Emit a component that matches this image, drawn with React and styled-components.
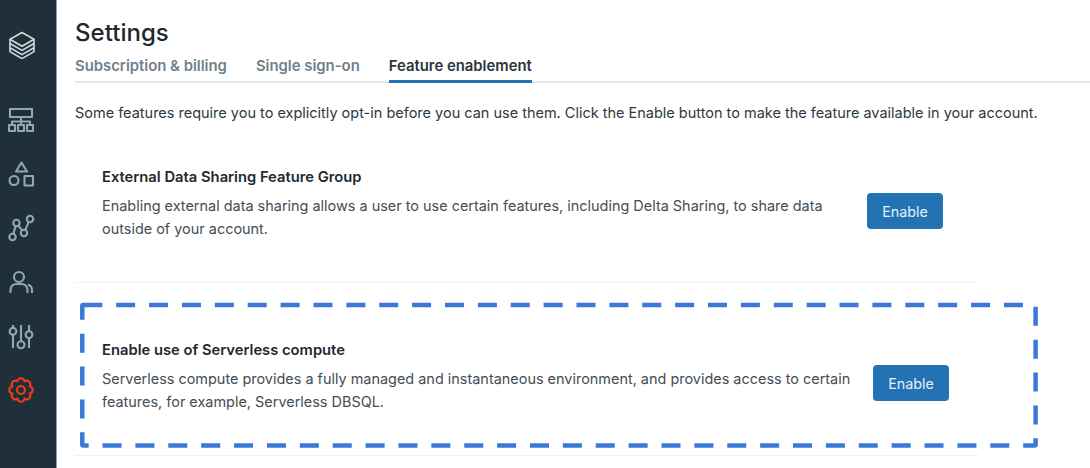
import styled, { createGlobalStyle } from 'styled-components';

const GlobalStyle = createGlobalStyle`
  html, body {
    margin: 0;
    padding: 0;
    background: #fff;
    font-family: 'Inter', 'Liberation Sans', sans-serif;
  }
  * {
    box-sizing: border-box;
  }
`;

const Page = styled.div`
  display: flex;
  width: 1090px;
  height: 468px;
  overflow: hidden;
`;

const Sidebar = styled.nav`
  display: flex;
  flex-direction: column;
  align-items: flex-start;
  flex: none;
  width: 57px;
  padding: 31px 0 0 7px;
  background: #1f303a;
  border-right: 1.5px solid #8e9ca6;
`;

const NavIcon = styled.svg`
  display: block;
  flex: none;
  width: 28px;
  height: 28px;
  margin-bottom: ${(p) => (p.$logo ? '47px' : '26px')};
  color: ${(p) => p.$color || '#93a6b4'};
  fill: none;
  stroke: currentColor;
  stroke-width: ${(p) => (p.$logo ? 1.6 : 2.1)};
  stroke-linejoin: round;
`;

const Main = styled.main`
  position: relative;
  flex: 1;
  padding: 18px 0 0 18px;
`;

const Title = styled.h1`
  margin: 0 0 8px;
  font-size: 24px;
  line-height: 30px;
  font-weight: 500;
  letter-spacing: 0.03px;
  color: #1f272d;
`;

const Tabs = styled.div`
  display: flex;
  gap: 29px;
  height: 27px;
  border-bottom: 2px solid #dfe8ef;
`;

const Tab = styled.div`
  height: 27px;
  padding-top: 1px;
  font-size: 14.87px;
  line-height: 19px;
  font-weight: 600;
  color: ${(p) => (p.$active ? '#2a3640' : '#6f7f8c')};
  border-bottom: ${(p) => (p.$active ? '3px solid #2272b4' : 'none')};
`;

const Intro = styled.p`
  margin: 20px 0 0;
  font-size: 14.49px;
  line-height: 20px;
  color: #2e3840;
  white-space: nowrap;
`;

const Feature = styled.section`
  display: flex;
  align-items: flex-start;
  width: 904px;
  height: ${(p) => p.$height}px;
  padding: ${(p) => p.$padTop}px 0 0 27px;
  border-bottom: 1px solid #f0f2f3;
`;

const FeatureText = styled.div`
  flex: none;
  width: ${(p) => p.$width}px;
`;

const FeatureName = styled.h2`
  margin: 0 0 8px;
  font-size: 14.75px;
  line-height: 18px;
  font-weight: 600;
  color: #22292f;
`;

const FeatureBody = styled.p`
  margin: 0;
  font-size: 14.45px;
  line-height: 23.3px;
  color: #444d55;
`;

const EnableButton = styled.button`
  flex: none;
  width: 76px;
  height: 36px;
  margin-top: ${(p) => p.$offset}px;
  padding: 1px 0 0;
  border: none;
  border-radius: 4px;
  background: #2272b4;
  color: #e6f0f8;
  font: 400 14.3px/35px 'Inter', 'Liberation Sans', sans-serif;
`;

const Highlight = styled.svg`
  position: absolute;
  top: 300px;
  left: 22px;
  width: 962px;
  height: 150px;
  fill: none;
  stroke: #3b78d8;
  stroke-width: 4.5;
  stroke-dasharray: 19 13.88;
`;

// scalloped outline for the settings cog
function gearPath() {
  const points = [];
  for (let i = 0; i < 8; i++) {
    const angle = ((i + 0.5) * Math.PI) / 4;
    points.push([14 + 9.3 * Math.cos(angle), 14 + 9.3 * Math.sin(angle)]);
  }
  const start = `M${points[0][0].toFixed(2)} ${points[0][1].toFixed(2)}`;
  const arcs = points
    .slice(1)
    .concat([points[0]])
    .map((pt) => `A3.6 3.6 0 0 1 ${pt[0].toFixed(2)} ${pt[1].toFixed(2)}`);
  return `${start} ${arcs.join(' ')} Z`;
}

function App() {
  return (
    <>
      <GlobalStyle />
      <Page>
        <Sidebar>
          <NavIcon $logo $color='#d3dade' viewBox='0 0 28 28'>
            <path d='M15 1.5 L27 8.3 L15 15.2 L3 8.3 Z' />
            <path d='M3 12.5 L15 19.4 L27 12.5' />
            <path d='M3 8.3 V16.7 L15 23.6 L27 16.7 V8.3' />
            <path d='M3 16.7 V20.6 L15 27.6 L27 20.6 V16.7' />
          </NavIcon>
          <NavIcon viewBox='0 0 28 28'>
            <path d='M3 3 H25 V11 H3 Z' />
            <path d='M14 11 V19 M5 19 V15.5 H23 V19' />
            <path d='M2 19 H8 V25 H2 Z M11 19 H17 V25 H11 Z M20 19 H26 V25 H20 Z' />
          </NavIcon>
          <NavIcon viewBox='0 0 28 28'>
            <path d='M14.5 2.5 L20 11.5 H9 Z' />
            <circle cx='7' cy='20.5' r='4.5' />
            <path d='M17.5 16 H26 V25.5 H17.5 Z' />
          </NavIcon>
          <NavIcon viewBox='0 0 28 28'>
            <circle cx='23' cy='5' r='3.2' />
            <circle cx='9.5' cy='9' r='3.2' />
            <circle cx='17' cy='19' r='3.2' />
            <circle cx='5.5' cy='23' r='3.2' />
            <path d='M6.4 19.9 L8.6 12.1 M11.4 11.6 L15.1 16.4 M18.25 16.05 L21.75 7.95' />
          </NavIcon>
          <NavIcon viewBox='0 0 28 28'>
            <circle cx='12' cy='9' r='5' />
            <path d='M3.5 25 V22.5 Q3.5 16 10 16 H14 Q20.5 16 20.5 22.5 V25' />
            <path d='M25 25 V22 Q25 18 21 16.5' />
          </NavIcon>
          <NavIcon viewBox='0 0 28 28'>
            <path d='M6 3 V6 M6 13 V26 M14 3 V19 M14 26.4 V27 M22 3 V9 M22 16.4 V26' />
            <circle cx='6' cy='9.3' r='3.4' />
            <circle cx='14' cy='22.7' r='3.5' />
            <circle cx='22' cy='12.7' r='3.4' />
          </NavIcon>
          <NavIcon $color='#f0381c' viewBox='0 0 28 28'>
            <circle cx='14' cy='14' r='4' />
            <path d={gearPath()} />
          </NavIcon>
        </Sidebar>
        <Main>
          <Title>Settings</Title>
          <Tabs>
            <Tab>Subscription &amp; billing</Tab>
            <Tab>Single sign-on</Tab>
            <Tab $active>Feature enablement</Tab>
          </Tabs>
          <Intro>
            Some features require you to explicitly opt-in before you can use them. Click the Enable button to make the feature available in your account.
          </Intro>
          <Feature $height={160} $padTop={45}>
            <FeatureText $width={765}>
              <FeatureName>External Data Sharing Feature Group</FeatureName>
              <FeatureBody>
                Enabling external data sharing allows a user to use certain features, including Delta Sharing, to share data outside of your account.
              </FeatureBody>
            </FeatureText>
            <EnableButton $offset={25}>Enable</EnableButton>
          </Feature>
          <Feature $height={173} $padTop={58}>
            <FeatureText $width={771}>
              <FeatureName>Enable use of Serverless compute</FeatureName>
              <FeatureBody>
                Serverless compute provides a fully managed and instantaneous environment, and provides access to certain features, for example, Serverless DBSQL.
              </FeatureBody>
            </FeatureText>
            <EnableButton $offset={24}>Enable</EnableButton>
          </Feature>
          <Highlight viewBox='0 0 962 150'>
            <rect x='3.3' y='5' width='953.3' height='140.5' rx='1' />
          </Highlight>
        </Main>
      </Page>
    </>
  );
}

export default App;
